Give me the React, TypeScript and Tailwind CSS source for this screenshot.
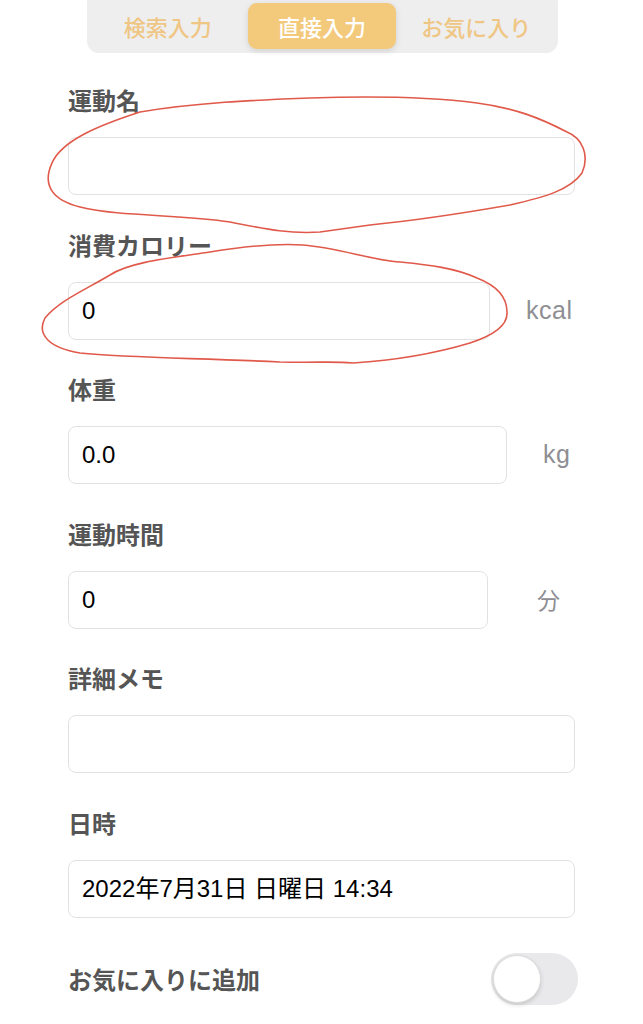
import React from "react";

const labelFont = { fontFamily: '"Noto Sans CJK JP", "Noto Sans", sans-serif' };
const inputFont = { fontFamily: '"Liberation Sans", "Noto Sans CJK JP", sans-serif' };

function Label({ children }: { children: React.ReactNode }) {
  return (
    <div className="h-[32px] mb-[21px] flex items-center text-[24px] font-bold text-[#555555] leading-none" style={labelFont}>
      {children}
    </div>
  );
}

function Box({ value, className = "" }: { value?: string; className?: string }) {
  return (
    <div
      className={`h-[58px] rounded-[8px] border border-[#e2e2e2] bg-white flex items-center pl-[13px] text-[24px] text-black ${className}`}
      style={inputFont}
    >
      {value}
    </div>
  );
}

function Unit({ text, boxW, padL }: { text: string; boxW: string; padL: string }) {
  return (
    <div className={`${boxW} ${padL} shrink-0 flex items-center text-[25px] tracking-[0.5px] text-[#8e8e93]`} style={inputFont}>
      {text}
    </div>
  );
}

export default function App() {
  return (
    <div className="relative w-[643px] h-[1024px] overflow-hidden bg-white">
      {/* segmented control */}
      <div className="flex justify-center">
        <div className="mt-[-10px] ml-[1px] w-[471px] h-[63px] rounded-[12px] bg-[#eeeeef] pt-[13px] px-[4px] pb-[4px] grid grid-cols-3">
          <div className="flex items-center justify-center text-[22px] font-medium text-[#efc684]" style={labelFont}>検索入力</div>
          <div className="mx-[3px] rounded-[9px] bg-[#f3c97b] shadow-[0_2px_6px_rgba(0,0,0,0.12)] flex items-center justify-center text-[22px] font-medium text-white" style={labelFont}>直接入力</div>
          <div className="flex items-center justify-center text-[22px] font-medium text-[#efc684]" style={labelFont}>お気に入り</div>
        </div>
      </div>

      <div className="px-[68px] pt-[31px] flex flex-col gap-[33.5px]">
        <div>
          <Label>運動名</Label>
          <Box />
        </div>
        <div>
          <Label>消費カロリー</Label>
          <div className="flex">
            <Box value="0" className="flex-1" />
            <Unit text="kcal" boxW="w-[85px]" padL="pl-[36px]" />
          </div>
        </div>
        <div>
          <Label>体重</Label>
          <div className="flex">
            <Box value="0.0" className="flex-1" />
            <Unit text="kg" boxW="w-[68px]" padL="pl-[36px]" />
          </div>
        </div>
        <div>
          <Label>運動時間</Label>
          <div className="flex">
            <Box value="0" className="flex-1" />
            <div className="w-[87px] pl-[49px] shrink-0 flex items-center text-[23px] text-[#8e8e93]" style={labelFont}>分</div>
          </div>
        </div>
        <div>
          <Label>詳細メモ</Label>
          <Box />
        </div>
        <div>
          <Label>日時</Label>
          <Box value="2022年7月31日 日曜日 14:34" />
        </div>
        <div className="flex items-center justify-between mt-[2px] mr-[-3px]">
          <div className="text-[24px] font-bold text-[#555555]" style={labelFont}>お気に入りに追加</div>
          <div className="w-[87px] h-[52px] rounded-full bg-[#e9e9eb] p-[2px] flex items-center">
            <div className="w-[48px] h-[48px] rounded-full bg-white border border-[#dcdcdc] shadow-[0_2px_4px_rgba(0,0,0,0.15)]" />
          </div>
        </div>
      </div>

      {/* hand-drawn annotations */}
      <svg className="absolute inset-0 pointer-events-none" width="643" height="1024" viewBox="0 0 643 1024">
        <path
          d="M140,112 C100,125 62,140 52,163 C42,185 52,200 80,207 C120,217 180,214 230,222 C270,230 292,234 320,232 L370,225 C420,220 470,212 510,205 C545,197 570,190 582,173 C590,155 582,138 567,132 C540,118 515,108 477,103 C430,97 370,96 310,98 C260,100 200,102 140,112 Z"
          fill="none"
          stroke="#e0594a"
          strokeWidth="1.6"
        />
        <path
          d="M210,252 C170,258 130,262 110,275 C85,290 60,300 45,318 C36,335 50,348 80,353 C130,358 200,358 280,362 C320,363 330,361 353,363 C400,360 440,352 470,343 C495,335 508,325 507,312 C507,295 495,285 477,278 C455,268 430,265 400,262 C370,260 340,248 303,245 C270,243 240,247 210,252 Z"
          fill="none"
          stroke="#e0594a"
          strokeWidth="1.6"
        />
      </svg>
    </div>
  );
}
